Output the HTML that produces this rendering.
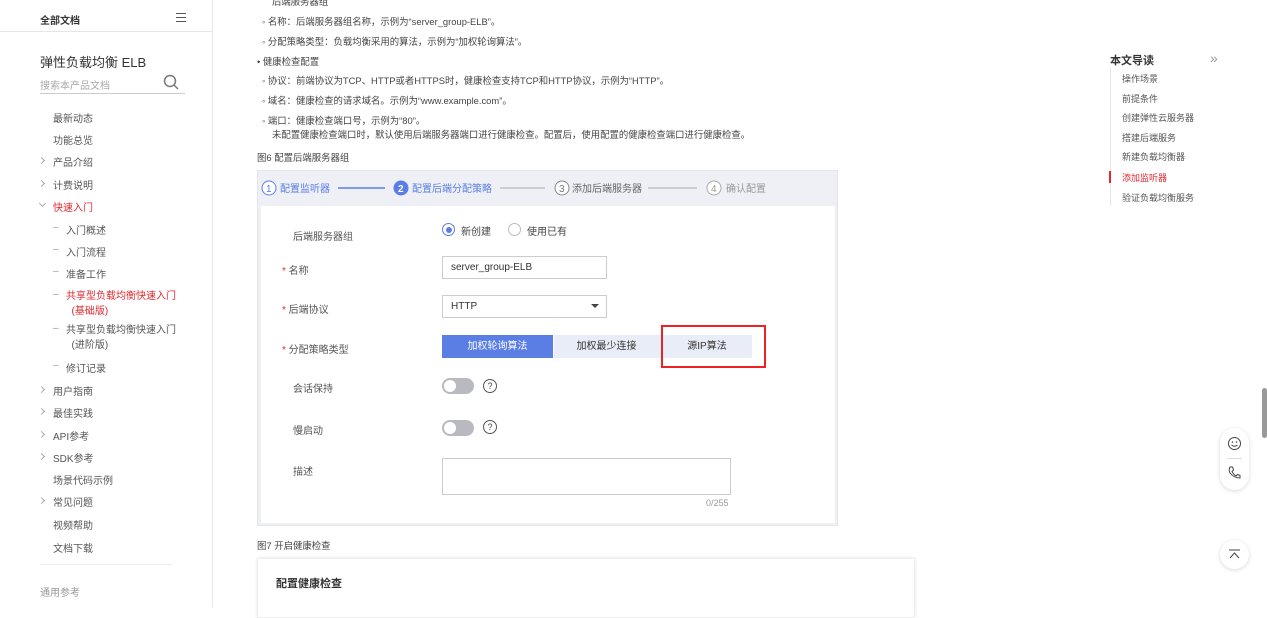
<!DOCTYPE html>
<html><head><meta charset="utf-8"><style>
*{margin:0;padding:0;box-sizing:border-box}
body{width:1267px;height:607px;overflow:hidden;background:#fff;font-family:"Liberation Sans","Noto Sans CJK SC",sans-serif;color:#333;position:relative;font-size:10px}
.a{position:absolute;white-space:nowrap}
.nav{font-size:10px;color:#555}
.red{color:#e0282e}
.g{color:#999}
.ch{position:absolute;width:5px;height:5px;border-right:1px solid #aaa;border-top:1px solid #aaa;transform:rotate(45deg)}
.t{font-size:9.4px;color:#444}
</style></head><body>
<!-- sidebar -->
<div class="a" style="left:0;top:0;width:213px;height:607px;border-right:1px solid #e8e8e8"></div>
<div class="a" style="left:40px;top:12px;font-size:10px;font-weight:bold;color:#333">全部文档</div>
<div class="a" style="left:176px;top:13px;width:10px;height:9px;border-top:1.5px solid #555;border-bottom:1.5px solid #555"><div style="margin-top:2.5px;border-top:1.5px solid #555"></div></div>
<div class="a" style="left:0;top:31px;width:212px;border-top:1px solid #e6e6e6"></div>
<div class="a" style="left:40px;top:52px;font-size:13px;color:#333">弹性负载均衡 ELB</div>
<div class="a" style="left:40px;top:77px;font-size:10px;color:#aaa">搜索本产品文档</div>
<svg class="a" style="left:163px;top:74px" width="17" height="16"><circle cx="7" cy="7" r="5.5" fill="none" stroke="#777" stroke-width="1.5"/><line x1="11" y1="11" x2="15" y2="15" stroke="#777" stroke-width="1.5"/></svg>
<div class="a" style="left:40px;top:93px;width:145px;border-top:1px solid #ccc"></div>
<div class="a nav" style="left:53px;top:110px">最新动态</div>
<div class="a nav" style="left:53px;top:132px">功能总览</div>
<div class="ch" style="left:39px;top:158px"></div><div class="a nav" style="left:53px;top:154px">产品介绍</div>
<div class="ch" style="left:39px;top:181px"></div><div class="a nav" style="left:53px;top:177px">计费说明</div>
<div class="ch" style="left:40px;top:201px;transform:rotate(135deg)"></div><div class="a nav red" style="left:53px;top:199px">快速入门</div>
<div class="a g" style="left:53px;top:222px">–</div><div class="a nav" style="left:66px;top:222px">入门概述</div>
<div class="a g" style="left:53px;top:244px">–</div><div class="a nav" style="left:66px;top:244px">入门流程</div>
<div class="a g" style="left:53px;top:266px">–</div><div class="a nav" style="left:66px;top:266px">准备工作</div>
<div class="a g" style="left:53px;top:289px">–</div><div class="a nav red" style="left:66px;top:289px;line-height:15px">共享型负载均衡快速入门<br>&nbsp;&nbsp;(基础版)</div>
<div class="a g" style="left:53px;top:323px">–</div><div class="a nav" style="left:66px;top:323px;line-height:15px">共享型负载均衡快速入门<br>&nbsp;&nbsp;(进阶版)</div>
<div class="a g" style="left:53px;top:360px">–</div><div class="a nav" style="left:66px;top:360px">修订记录</div>
<div class="ch" style="left:39px;top:387px"></div><div class="a nav" style="left:53px;top:383px">用户指南</div>
<div class="ch" style="left:39px;top:409px"></div><div class="a nav" style="left:53px;top:405px">最佳实践</div>
<div class="ch" style="left:39px;top:432px"></div><div class="a nav" style="left:53px;top:428px">API参考</div>
<div class="ch" style="left:39px;top:454px"></div><div class="a nav" style="left:53px;top:450px">SDK参考</div>
<div class="a nav" style="left:53px;top:472px">场景代码示例</div>
<div class="ch" style="left:39px;top:498px"></div><div class="a nav" style="left:53px;top:494px">常见问题</div>
<div class="a nav" style="left:53px;top:517px">视频帮助</div>
<div class="a nav" style="left:53px;top:540px">文档下载</div>
<div class="a" style="left:40px;top:564px;width:132px;border-top:1px solid #eee"></div>
<div class="a g" style="left:40px;top:584px">通用参考</div>

<!-- content text -->
<div class="a t" style="left:272px;top:-6px">后端服务器组</div>
<div class="a t" style="left:262px;top:14px">◦ 名称：后端服务器组名称，示例为“server_group-ELB”。</div>
<div class="a t" style="left:262px;top:34px">◦ 分配策略类型：负载均衡采用的算法，示例为“加权轮询算法”。</div>
<div class="a t" style="left:257px;top:54px">• 健康检查配置</div>
<div class="a t" style="left:262px;top:73px">◦ 协议：前端协议为TCP、HTTP或者HTTPS时，健康检查支持TCP和HTTP协议，示例为“HTTP”。</div>
<div class="a t" style="left:262px;top:93px">◦ 域名：健康检查的请求域名。示例为“www.example.com”。</div>
<div class="a t" style="left:262px;top:113px">◦ 端口：健康检查端口号，示例为“80”。</div>
<div class="a t" style="left:272px;top:127px">未配置健康检查端口时，默认使用后端服务器端口进行健康检查。配置后，使用配置的健康检查端口进行健康检查。</div>
<div class="a t" style="left:257px;top:150px">图6 配置后端服务器组</div>

<!-- figure 6 -->
<div class="a" style="left:257px;top:170px;width:581px;height:356px;background:#eef0f5;border:1px solid #e4e6ec"></div>
<svg class="a" style="left:260px;top:178px" width="540" height="20" font-family="Liberation Sans,Noto Sans CJK SC,sans-serif" font-size="10">
<circle cx="9" cy="10" r="7" fill="#fff" stroke="#5b7ee5" stroke-width="1"/><text x="6" y="14" fill="#5b7ee5" font-size="10">1</text>
<text x="20" y="14" fill="#5b7ee5">配置监听器</text>
<line x1="78" y1="10" x2="125" y2="10" stroke="#5b7ee5" stroke-width="1.5"/>
<circle cx="141" cy="10" r="7.5" fill="#5b7ee5"/><text x="138" y="14" fill="#fff" font-weight="bold">2</text>
<text x="152" y="14" fill="#5b7ee5">配置后端分配策略</text>
<line x1="240" y1="10" x2="285" y2="10" stroke="#aaa" stroke-width="1"/>
<circle cx="302" cy="10" r="7" fill="#fff" stroke="#888"/><text x="299" y="14" fill="#777">3</text>
<text x="312" y="14" fill="#666">添加后端服务器</text>
<line x1="388" y1="10" x2="437" y2="10" stroke="#aaa"/>
<circle cx="454" cy="10" r="7" fill="#fff" stroke="#aaa"/><text x="451" y="14" fill="#999">4</text>
<text x="466" y="14" fill="#999">确认配置</text>
</svg>
<div class="a" style="left:261px;top:206px;width:574px;height:317px;background:#fff"></div>

<div class="a" style="left:293px;top:228px;font-size:10px;color:#555">后端服务器组</div>
<div class="a" style="left:442px;top:223px;width:13px;height:13px;border:1px solid #5b7ee5;border-radius:50%"><div style="margin:2.5px;width:6px;height:6px;border-radius:50%;background:#5b7ee5"></div></div>
<div class="a" style="left:461px;top:223px;font-size:10px;color:#444">新创建</div>
<div class="a" style="left:508px;top:223px;width:13px;height:13px;border:1px solid #bbb;border-radius:50%"></div>
<div class="a" style="left:527px;top:223px;font-size:10px;color:#444">使用已有</div>

<div class="a" style="left:282px;top:262px;font-size:10px;color:#555"><span class="red">*</span> 名称</div>
<div class="a" style="left:442px;top:256px;width:165px;height:23px;border:1px solid #ccc;padding:0 8px;line-height:21px;font-size:10px;color:#333">server_group-ELB</div>

<div class="a" style="left:282px;top:301px;font-size:10px;color:#555"><span class="red">*</span> 后端协议</div>
<div class="a" style="left:442px;top:295px;width:165px;height:23px;border:1px solid #ccc;padding:0 8px;line-height:21px;font-size:10px;color:#333">HTTP</div>
<div class="a" style="left:591px;top:304px;border:4px solid transparent;border-top:4px solid #444;border-bottom:0"></div>

<div class="a" style="left:282px;top:341px;font-size:10px;color:#555"><span class="red">*</span> 分配策略类型</div>
<div class="a" style="left:442px;top:335px;width:111px;height:23px;background:#5b7ee5;color:#fff;font-size:10px;text-align:center;line-height:23px">加权轮询算法</div>
<div class="a" style="left:554px;top:335px;width:198px;height:23px;background:#e9edf8"></div>
<div class="a" style="left:554px;top:335px;width:105px;height:23px;color:#333;font-size:10px;text-align:center;line-height:23px">加权最少连接</div>
<div class="a" style="left:662px;top:335px;width:90px;height:23px;color:#333;font-size:10px;text-align:center;line-height:23px">源IP算法</div>
<div class="a" style="left:661px;top:325px;width:105px;height:43px;border:2px solid #ee2222"></div>

<div class="a" style="left:293px;top:380px;font-size:10px;color:#555">会话保持</div>
<div class="a" style="left:442px;top:378px;width:32px;height:16px;border-radius:8px;background:#b8bac0"><div style="margin:2px;width:12px;height:12px;border-radius:50%;background:#fff"></div></div>
<div class="a" style="left:483px;top:379px;width:14px;height:14px;border:1.3px solid #555;border-radius:50%;font-size:9px;text-align:center;line-height:12px;color:#444">?</div>

<div class="a" style="left:293px;top:422px;font-size:10px;color:#555">慢启动</div>
<div class="a" style="left:442px;top:420px;width:32px;height:16px;border-radius:8px;background:#b8bac0"><div style="margin:2px;width:12px;height:12px;border-radius:50%;background:#fff"></div></div>
<div class="a" style="left:483px;top:420px;width:14px;height:14px;border:1.3px solid #555;border-radius:50%;font-size:9px;text-align:center;line-height:12px;color:#444">?</div>

<div class="a" style="left:293px;top:463px;font-size:10px;color:#555">描述</div>
<div class="a" style="left:442px;top:458px;width:289px;height:37px;border:1px solid #ccc"></div>
<div class="a g" style="left:706px;top:498px;font-size:9px">0/255</div>

<div class="a t" style="left:257px;top:538px">图7 开启健康检查</div>
<div class="a" style="left:257px;top:558px;width:658px;height:60px;border:1px solid #eee;box-shadow:0 0 3px #e4e4e4"></div>
<div class="a" style="left:276px;top:575px;font-size:11px;font-weight:bold;color:#333">配置健康检查</div>

<!-- right nav -->
<div class="a" style="left:1110px;top:52px;font-size:11px;font-weight:bold;color:#333">本文导读</div>
<div class="a" style="left:1210px;top:50px;font-size:14px;color:#999">»</div>
<div class="a" style="left:1110px;top:68px;height:138px;border-left:1px solid #e6e6e6"></div>
<div class="a" style="left:1109px;top:171px;height:12px;border-left:2px solid #e0282e"></div>
<div class="a nav" style="left:1122px;top:72px;font-size:9px">操作场景</div>
<div class="a nav" style="left:1122px;top:92px;font-size:9px">前提条件</div>
<div class="a nav" style="left:1122px;top:111px;font-size:9px">创建弹性云服务器</div>
<div class="a nav" style="left:1122px;top:131px;font-size:9px">搭建后端服务</div>
<div class="a nav" style="left:1122px;top:150px;font-size:9px">新建负载均衡器</div>
<div class="a nav red" style="left:1122px;top:171px;font-size:9px">添加监听器</div>
<div class="a nav" style="left:1122px;top:191px;font-size:9px">验证负载均衡服务</div>

<div class="a" style="left:1262px;top:388px;width:5px;height:50px;background:#999;border-radius:3px"></div>
<div class="a" style="left:1220px;top:428px;width:29px;height:62px;border-radius:15px;background:#fff;box-shadow:0 1px 5px rgba(0,0,0,.15)"></div>
<svg class="a" style="left:1227px;top:436px" width="15" height="15"><circle cx="7.5" cy="7.5" r="6" fill="none" stroke="#444"/><circle cx="5.5" cy="6" r=".8" fill="#444"/><circle cx="9.5" cy="6" r=".8" fill="#444"/><path d="M4.5 9 Q7.5 11.5 10.5 9" fill="none" stroke="#444"/></svg>
<div class="a" style="left:1227px;top:458px;width:15px;border-top:1px solid #ddd"></div>
<svg class="a" style="left:1227px;top:465px" width="15" height="15"><path d="M3 2 L5.5 2 L6.5 5 L5 6.5 Q7 10 9 11 L10.5 9.5 L13 10.5 L13 13 Q7 13 3 8 Q1.5 5 3 2Z" fill="none" stroke="#444"/></svg>
<div class="a" style="left:1220px;top:540px;width:29px;height:29px;border-radius:50%;background:#fff;box-shadow:0 1px 5px rgba(0,0,0,.15)"></div>
<svg class="a" style="left:1227px;top:547px" width="15" height="15"><line x1="2" y1="3" x2="13" y2="3" stroke="#444"/><path d="M3 11 L7.5 6 L12 11" fill="none" stroke="#444"/></svg>
</body></html>
